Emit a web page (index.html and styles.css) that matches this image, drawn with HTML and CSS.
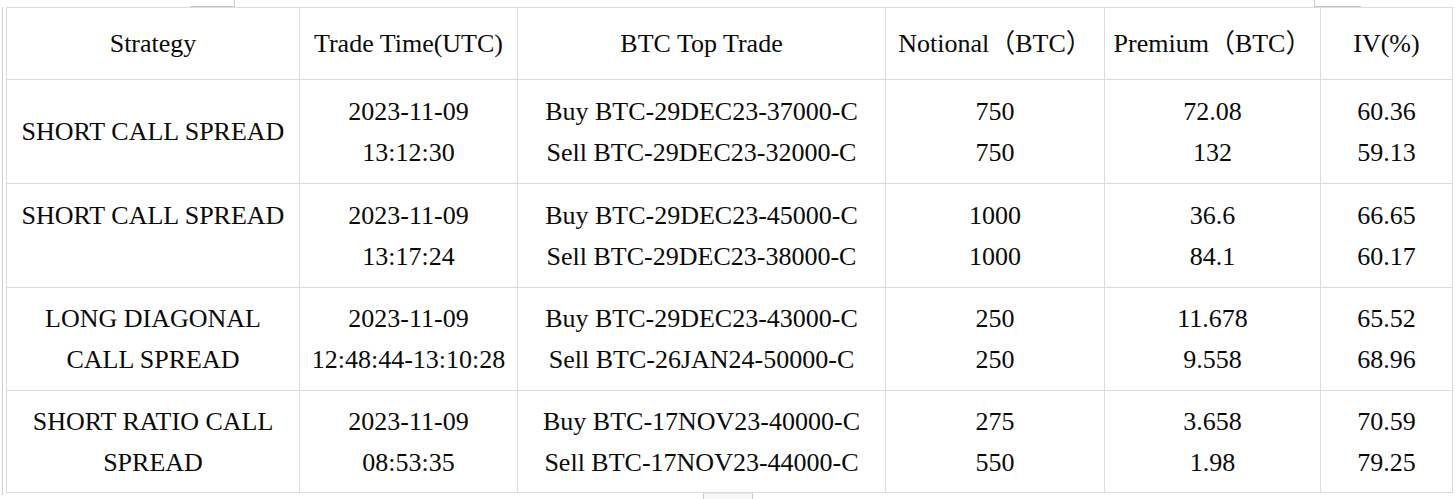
FILE: index.html
```html
<!DOCTYPE html>
<html>
<head>
<meta charset="utf-8">
<link rel="stylesheet" href="styles.css">
</head>
<body>
<div class="page">
  <span class="mark mark-top-left"></span>
  <span class="mark mark-top-right"></span>
  <span class="mark mark-bottom"></span>
  <span class="edge-left"></span>
  <table class="trades">
    <colgroup>
      <col class="c1"><col class="c2"><col class="c3"><col class="c4"><col class="c5"><col class="c6">
    </colgroup>
    <thead>
      <tr class="head">
        <th>Strategy</th>
        <th>Trade Time(UTC)</th>
        <th>BTC Top Trade</th>
        <th>Notional（BTC）</th>
        <th>Premium（BTC）</th>
        <th>IV(%)</th>
      </tr>
    </thead>
    <tbody>
      <tr class="r1">
        <td>SHORT CALL SPREAD</td>
        <td>2023-11-09<br>13:12:30</td>
        <td>Buy BTC-29DEC23-37000-C<br>Sell BTC-29DEC23-32000-C</td>
        <td>750<br>750</td>
        <td>72.08<br>132</td>
        <td>60.36<br>59.13</td>
      </tr>
      <tr class="r2">
        <td>SHORT CALL SPREAD<br>&nbsp;</td>
        <td>2023-11-09<br>13:17:24</td>
        <td>Buy BTC-29DEC23-45000-C<br>Sell BTC-29DEC23-38000-C</td>
        <td>1000<br>1000</td>
        <td>36.6<br>84.1</td>
        <td>66.65<br>60.17</td>
      </tr>
      <tr class="r3">
        <td>LONG DIAGONAL<br>CALL SPREAD</td>
        <td>2023-11-09<br>12:48:44-13:10:28</td>
        <td>Buy BTC-29DEC23-43000-C<br>Sell BTC-26JAN24-50000-C</td>
        <td>250<br>250</td>
        <td>11.678<br>9.558</td>
        <td>65.52<br>68.96</td>
      </tr>
      <tr class="r4">
        <td>SHORT RATIO CALL<br>SPREAD</td>
        <td>2023-11-09<br>08:53:35</td>
        <td>Buy BTC-17NOV23-40000-C<br>Sell BTC-17NOV23-44000-C</td>
        <td>275<br>550</td>
        <td>3.658<br>1.98</td>
        <td>70.59<br>79.25</td>
      </tr>
    </tbody>
  </table>
</div>
</body>
</html>
```
FILE: styles.css
```css
html, body {
  margin: 0;
  padding: 0;
  background: #ffffff;
}
.page {
  position: relative;
  width: 1455px;
  height: 499px;
  padding: 7px 0 0 6px;
  box-sizing: border-box;
  overflow: hidden;
}
.trades {
  border-collapse: collapse;
  table-layout: fixed;
  width: 1446px;
  font-family: "Liberation Serif", "Noto Sans CJK SC", serif;
  font-size: 26px;
  color: #0a0a0a;
}
.c1 { width: 293px; }
.c2 { width: 218px; }
.c3 { width: 368px; }
.c4 { width: 219px; }
.c5 { width: 216px; }
.c6 { width: 132px; }
.trades th,
.trades td {
  border: 1px solid #dcdcdc;
  text-align: center;
  vertical-align: middle;
  font-weight: normal;
  padding: 0;
  line-height: 41px;
  white-space: nowrap;
}
.head th {
  height: 71px;
}
.r1 td { height: 103px; }
.r2 td { height: 103px; }
.r3 td { height: 102px; }
.r4 td { height: 101px; }
.mark {
  position: absolute;
  border-color: #c8c8c8;
  border-style: solid;
  border-width: 0;
}
.mark-top-left {
  left: 190px;
  top: 0;
  width: 44px;
  height: 6px;
  border-bottom-width: 1px;
  border-right-width: 1px;
}
.mark-top-right {
  left: 1314px;
  top: 0;
  width: 46px;
  height: 6px;
  border-bottom-width: 1px;
  border-left-width: 1px;
}
.mark-bottom {
  left: 703px;
  top: 493px;
  width: 48px;
  height: 8px;
  border-left-width: 1px;
  border-right-width: 1px;
  border-top-width: 1px;
  border-top-color: #e4e4e4;
  background: #f7f7f7;
}
.edge-left {
  position: absolute;
  left: 2px;
  top: 7px;
  width: 1px;
  height: 488px;
  background: #cfcfcf;
}
```
